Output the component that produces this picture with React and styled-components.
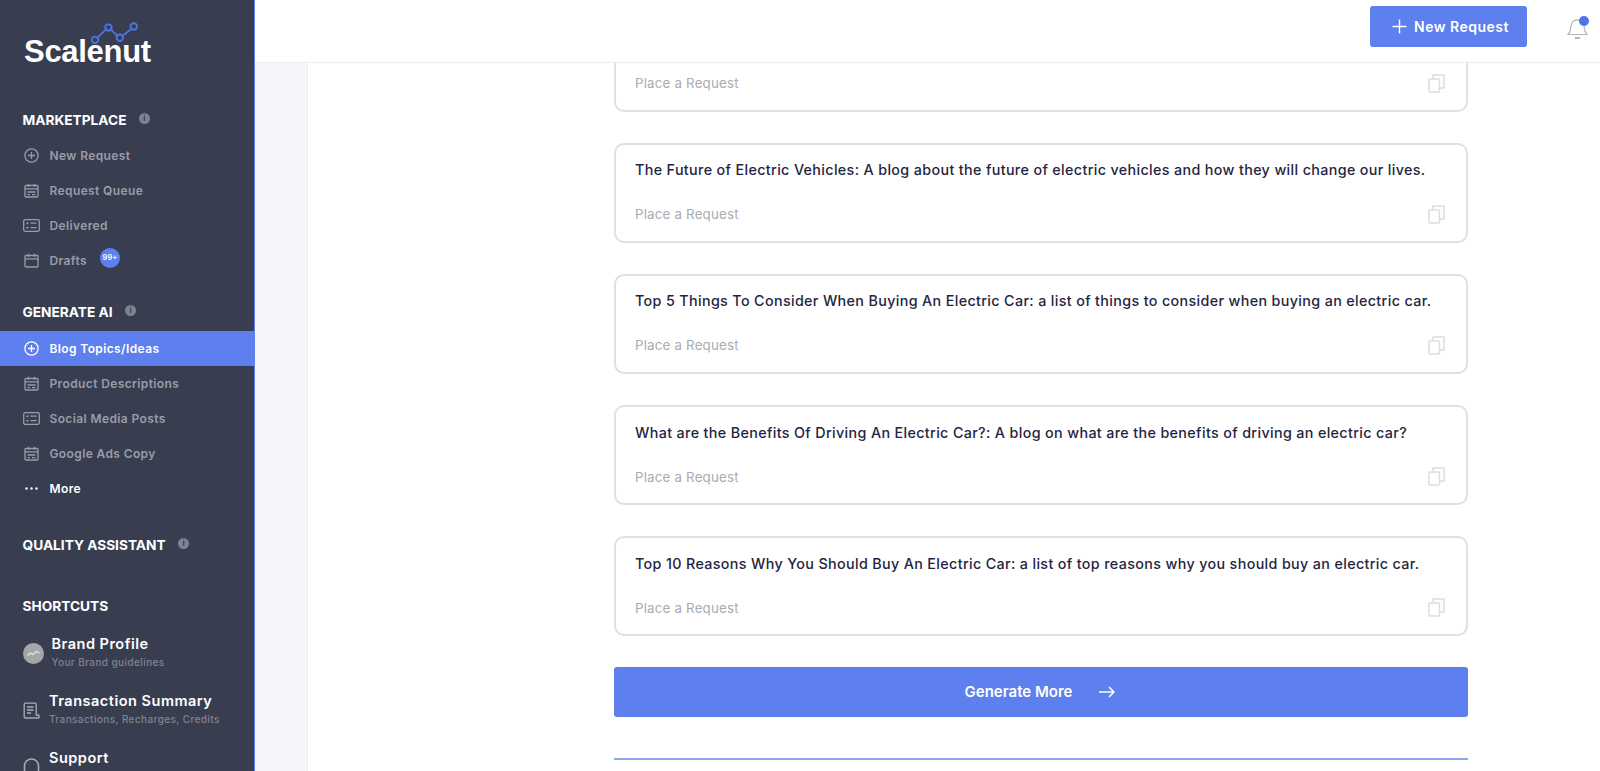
import React from "react";
import styled, { createGlobalStyle } from "styled-components";

const GlobalStyle = createGlobalStyle`
  html, body {
    margin: 0;
    padding: 0;
    height: 100%;
    overflow: hidden;
    background: #fff;
    font-family: Inter, "Open Sans", sans-serif;
  }
  * { box-sizing: border-box; }
`;

const Page = styled.div`
  display: flex;
  width: 1600px;
  height: 771px;
  overflow: hidden;
`;

const Sidebar = styled.aside`
  flex: 0 0 255px;
  height: 771px;
  overflow: hidden;
  background: #383e50;
  border-right: 1px solid #5d80ee;
  display: flex;
  flex-direction: column;
  & > * {
    flex-shrink: 0;
  }
`;

const LogoBox = styled.div`
  position: relative;
  height: 110px;
  padding: 33px 0 0 24px;
`;

const LogoText = styled.div`
  font-family: "Liberation Sans", Arial, sans-serif;
  font-size: 31px;
  font-weight: 700;
  line-height: 38px;
  letter-spacing: -0.3px;
  color: #fff;
`;

const LogoGraph = styled.svg`
  position: absolute;
  left: 89px;
  top: 20px;
`;

const SectionTitle = styled.div`
  display: flex;
  align-items: center;
  gap: 12.5px;
  height: 20px;
  margin-top: ${(p) => p.$top || 0}px;
  padding-left: 22.5px;
  font-size: 13.7px;
  font-weight: 700;
  color: #fff;
`;

const InfoDot = styled.span`
  width: 11px;
  height: 11px;
  border-radius: 50%;
  background: #7f8391;
  color: #383e50;
  font-size: 8px;
  font-weight: 700;
  line-height: 11px;
  text-align: center;
  margin-top: -3px;
`;

const NavList = styled.nav`
  display: flex;
  flex-direction: column;
  margin-top: ${(p) => p.$top || 0}px;
`;

const NavRow = styled.div`
  display: flex;
  align-items: center;
  height: 35px;
  padding-left: 23px;
  font-size: 12px;
  font-weight: 600;
  letter-spacing: 0.38px;
  color: ${(p) => (p.$bright ? "#fff" : "#9a9ca7")};
  background: ${(p) => (p.$active ? "#5d80ee" : "transparent")};
`;

const NavIcon = styled.span`
  display: flex;
  align-items: center;
  justify-content: center;
  width: 17px;
  height: 17px;
  margin-right: 9.5px;
`;

const CountBadge = styled.span`
  position: relative;
  top: -3px;
  width: 20px;
  height: 20px;
  margin-left: 13px;
  border-radius: 50%;
  background: #5d80ee;
  color: #fff;
  font-size: 7.5px;
  font-weight: 600;
  letter-spacing: 0;
  line-height: 20px;
  text-align: center;
`;

const Shortcut = styled.div`
  display: flex;
  align-items: flex-start;
  height: 57px;
  padding-left: 23px;
  margin-top: ${(p) => p.$top || 0}px;
`;

const ShortcutIcon = styled.span`
  display: flex;
  align-items: center;
  justify-content: center;
  width: ${(p) => p.$w}px;
  height: 38px;
  margin-right: ${(p) => p.$gap}px;
`;

const ShortcutText = styled.div`
  display: flex;
  flex-direction: column;
`;

const ShortcutTitle = styled.div`
  font-size: 14.5px;
  font-weight: 600;
  line-height: 20px;
  letter-spacing: 0.5px;
  color: #fff;
`;

const ShortcutSub = styled.div`
  font-size: 10px;
  font-weight: 500;
  line-height: 16px;
  letter-spacing: 0.4px;
  color: #80838f;
`;

const BrandIcon = styled.span`
  display: flex;
  align-items: center;
  justify-content: center;
  width: 21px;
  height: 21px;
  border-radius: 50%;
  background: #a5a6a8;
`;

const Right = styled.div`
  flex: 1;
  min-width: 0;
  display: flex;
  flex-direction: column;
  height: 771px;
`;

const Header = styled.header`
  flex: 0 0 63px;
  display: flex;
  align-items: flex-start;
  justify-content: flex-end;
  padding: 6px 12px 0 0;
  background: #fff;
  border-bottom: 1px solid #eeeef1;
  position: relative;
  z-index: 2;
`;

const NewRequestButton = styled.button`
  display: flex;
  align-items: center;
  justify-content: center;
  gap: 7px;
  width: 157px;
  height: 41px;
  padding: 0 0 0 4px;
  border: 0;
  border-radius: 3px;
  background: #5d80ee;
  color: #fff;
  font-family: inherit;
  font-size: 14px;
  font-weight: 600;
  letter-spacing: 0.5px;
`;

const BellWrap = styled.div`
  position: relative;
  width: 21px;
  height: 26px;
  margin: 10px 0 0 40px;
`;

const BellDot = styled.span`
  position: absolute;
  top: 0;
  right: -1px;
  width: 10px;
  height: 10px;
  border-radius: 50%;
  background: #4f74e3;
`;

const Body = styled.div`
  flex: 1;
  min-height: 0;
  display: flex;
  overflow: hidden;
`;

const Gutter = styled.div`
  flex: 0 0 53px;
  background: #f5f6fb;
  border-right: 1px solid #ececf0;
`;

const Main = styled.main`
  flex: 1;
  padding: 0 132px 0 306px;
  background: #fff;
`;

const CardList = styled.div`
  display: flex;
  flex-direction: column;
  gap: 31.2px;
  margin-top: -51.5px;
`;

const Card = styled.div`
  height: 100px;
  padding: 15.5px 21.5px 16.5px 19px;
  border: 2px solid #dfe0e5;
  border-radius: 10px;
  display: flex;
  flex-direction: column;
  justify-content: space-between;
`;

const CardTitle = styled.div`
  font-size: 14.3px;
  font-weight: 500;
  line-height: 20px;
  letter-spacing: 0.36px;
  color: #1f2542;
`;

const CardFooter = styled.div`
  display: flex;
  align-items: center;
  justify-content: space-between;
  font-size: 13.3px;
  line-height: 20px;
  letter-spacing: 0.2px;
  color: #a9abb1;
`;

const GenerateButton = styled.button`
  display: flex;
  align-items: center;
  justify-content: center;
  gap: 27px;
  width: 100%;
  height: 50px;
  margin-top: 30.5px;
  padding-left: 4px;
  border: 0;
  border-radius: 3px;
  background: #5d80ee;
  color: #fff;
  font-family: inherit;
  font-size: 15px;
  font-weight: 600;
`;

const Rule = styled.div`
  height: 2px;
  margin-top: 41px;
  background: #8ea6f1;
`;

const stroke = { fill: "none", stroke: "currentColor", strokeWidth: 1.3 };

const PlusCircle = () => (
  <svg width="15" height="15" viewBox="0 0 15 15" {...stroke}>
    <circle cx="7.5" cy="7.5" r="6.6" />
    <path d="M7.5 4v7M4 7.5h7" />
  </svg>
);

const Calendar = ({ lines }) => (
  <svg width="15" height="15" viewBox="0 0 15 15" {...stroke}>
    <rect x="1" y="2.5" width="13" height="11.5" rx="1" />
    <path d="M1 5.8h13M4.5 0.8v3M10.5 0.8v3" />
    {lines && <path d="M3.5 9h8M3.5 11.6h2.5M8 11.6h3.5" />}
  </svg>
);

const ListCard = () => (
  <svg width="17" height="13" viewBox="0 0 17 13" {...stroke}>
    <rect x="0.7" y="0.7" width="15.6" height="11.6" rx="1.5" />
    <path d="M3.5 4l.7.7 1.2-1.2M3.5 8.5l.7.7 1.2-1.2M7.5 4.2h6M7.5 8.6h6" />
  </svg>
);

const Dots = () => (
  <svg width="13" height="3" viewBox="0 0 13 3" fill="currentColor">
    <circle cx="1.5" cy="1.5" r="1.2" />
    <circle cx="6.5" cy="1.5" r="1.2" />
    <circle cx="11.5" cy="1.5" r="1.2" />
  </svg>
);

const Receipt = () => (
  <svg width="17" height="17" viewBox="0 0 17 17" fill="none" stroke="#a9abb2" strokeWidth="1.3">
    <path d="M13.2 13V2.2a1 1 0 0 0-1-1H2.2a1 1 0 0 0-1 1V15a1 1 0 0 0 1 1h13a1 1 0 0 0 .9-1.4l-.5-1.6z" />
    <path d="M4 5h6.5M4 8h6.5M4 11h4" />
  </svg>
);

const Headset = () => (
  <svg width="17" height="22" viewBox="0 0 17 22" fill="none" stroke="#a9abb2" strokeWidth="1.6">
    <path d="M1.5 16V10a7 7 0 0 1 14 0v6" />
  </svg>
);

const CopyIcon = () => (
  <svg width="17" height="19" viewBox="0 0 17 19" fill="none" stroke="#dcdde1" strokeWidth="1.5">
    <rect x="1" y="5" width="10.5" height="13" rx="1" />
    <path d="M5 4.5V1h11v13h-4" />
  </svg>
);

const Bell = () => (
  <svg width="21" height="26" viewBox="0 0 21 26" fill="none" stroke="#b4b5bb" strokeWidth="1.2">
    <path d="M1 18.5c2-2 2.6-3.6 2.8-7C4 7 6.5 3.8 10.5 3.8s6.5 3.2 6.7 7.7c.2 3.4.8 5 2.8 7z" />
    <path d="M8 22h5" strokeWidth="2" />
  </svg>
);

const navGroups = {
  marketplace: [
    { label: "New Request", icon: <PlusCircle /> },
    { label: "Request Queue", icon: <Calendar lines /> },
    { label: "Delivered", icon: <ListCard /> },
    { label: "Drafts", icon: <Calendar />, badge: "99+" },
  ],
  generate: [
    { label: "Blog Topics/Ideas", icon: <PlusCircle />, active: true },
    { label: "Product Descriptions", icon: <Calendar lines /> },
    { label: "Social Media Posts", icon: <ListCard /> },
    { label: "Google Ads Copy", icon: <Calendar lines /> },
    { label: "More", icon: <Dots />, bright: true },
  ],
};

const ideas = [
  "",
  "The Future of Electric Vehicles: A blog about the future of electric vehicles and how they will change our lives.",
  "Top 5 Things To Consider When Buying An Electric Car: a list of things to consider when buying an electric car.",
  "What are the Benefits Of Driving An Electric Car?: A blog on what are the benefits of driving an electric car?",
  "Top 10 Reasons Why You Should Buy An Electric Car: a list of top reasons why you should buy an electric car.",
];

function Nav({ items, top }) {
  return (
    <NavList $top={top}>
      {items.map((item) => (
        <NavRow key={item.label} $active={item.active} $bright={item.active || item.bright}>
          <NavIcon>{item.icon}</NavIcon>
          {item.label}
          {item.badge && <CountBadge>{item.badge}</CountBadge>}
        </NavRow>
      ))}
    </NavList>
  );
}

export default function App() {
  return (
    <Page>
      <GlobalStyle />
      <Sidebar>
        <LogoBox>
          <LogoGraph width="54" height="28" viewBox="0 0 50 26" fill="none" stroke="#4f74e3" strokeWidth="1.7">
            <path d="M7 17L16.5 8M19.5 8L27 15.5M30.5 15L39 8.5" />
            <circle cx="5.5" cy="18.5" r="3" />
            <circle cx="18" cy="7" r="3" />
            <circle cx="28.5" cy="16.5" r="3" />
            <circle cx="41.5" cy="6" r="3" />
          </LogoGraph>
          <LogoText>Scalenut</LogoText>
        </LogoBox>

        <SectionTitle>
          MARKETPLACE <InfoDot>i</InfoDot>
        </SectionTitle>
        <Nav items={navGroups.marketplace} top={8} />

        <SectionTitle $top={24}>
          GENERATE AI <InfoDot>i</InfoDot>
        </SectionTitle>
        <Nav items={navGroups.generate} top={9} />

        <SectionTitle $top={29}>
          QUALITY ASSISTANT <InfoDot>i</InfoDot>
        </SectionTitle>

        <SectionTitle $top={41}>SHORTCUTS</SectionTitle>

        <Shortcut $top={18}>
          <ShortcutIcon $w={21} $gap={7.5}>
            <BrandIcon>
              <svg width="13" height="7" viewBox="0 0 13 7" fill="none" stroke="#e6e6e8" strokeWidth="1.3">
                <path d="M0.5 5.5L3.5 3L6 4.5L9.5 1.5L12.5 3" />
              </svg>
            </BrandIcon>
          </ShortcutIcon>
          <ShortcutText>
            <ShortcutTitle>Brand Profile</ShortcutTitle>
            <ShortcutSub>Your Brand guidelines</ShortcutSub>
          </ShortcutText>
        </Shortcut>
        <Shortcut>
          <ShortcutIcon $w={17} $gap={9}>
            <Receipt />
          </ShortcutIcon>
          <ShortcutText>
            <ShortcutTitle>Transaction Summary</ShortcutTitle>
            <ShortcutSub>Transactions, Recharges, Credits</ShortcutSub>
          </ShortcutText>
        </Shortcut>
        <Shortcut>
          <ShortcutIcon $w={17} $gap={9}>
            <Headset />
          </ShortcutIcon>
          <ShortcutText>
            <ShortcutTitle>Support</ShortcutTitle>
          </ShortcutText>
        </Shortcut>
      </Sidebar>

      <Right>
        <Header>
          <NewRequestButton>
            <svg width="15" height="15" viewBox="0 0 15 15" stroke="#fff" strokeWidth="1.4">
              <path d="M7.5 0.5v14M0.5 7.5h14" />
            </svg>
            New Request
          </NewRequestButton>
          <BellWrap>
            <Bell />
            <BellDot />
          </BellWrap>
        </Header>
        <Body>
          <Gutter />
          <Main>
            <CardList>
              {ideas.map((idea, i) => (
                <Card key={i}>
                  <CardTitle>{idea}</CardTitle>
                  <CardFooter>
                    Place a Request
                    <CopyIcon />
                  </CardFooter>
                </Card>
              ))}
            </CardList>
            <GenerateButton>
              Generate More
              <svg width="16" height="12" viewBox="0 0 16 12" fill="none" stroke="#fff" strokeWidth="1.5">
                <path d="M0 6h15M10 1l5 5-5 5" />
              </svg>
            </GenerateButton>
            <Rule />
          </Main>
        </Body>
      </Right>
    </Page>
  );
}
